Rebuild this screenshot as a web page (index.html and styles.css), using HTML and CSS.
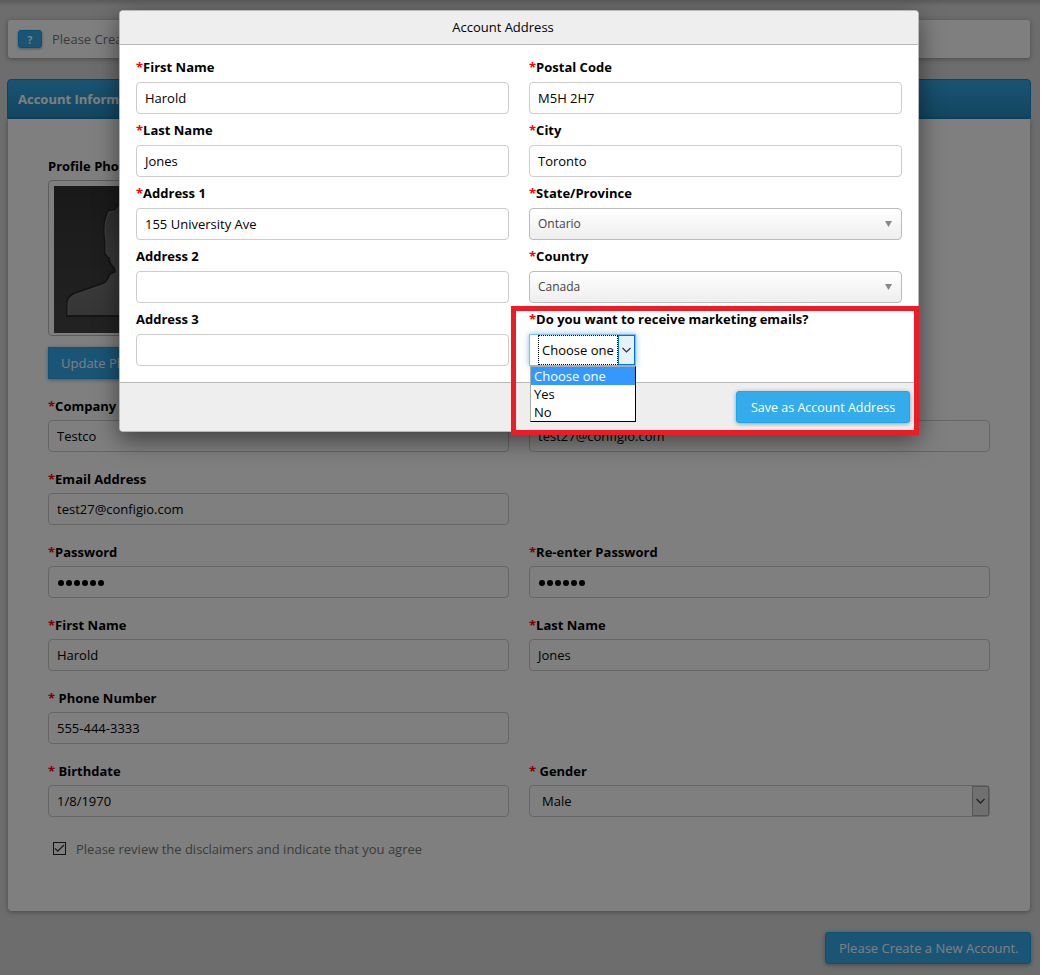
FILE: index.html
```html
<!DOCTYPE html>
<html lang="en">
<head>
<meta charset="utf-8">
<title>Account Information</title>
<link rel="stylesheet" href="styles.css">
</head>
<body>
<div class="page">
  <div class="notice"><span class="help">?</span><span class="notice-text">Please Create a New Account.</span></div>
  <section class="panel">
    <h1 class="panel-title"><span class="title-text">Account Information</span></h1>
    <div class="panel-body">
      <div class="profile">
        <div class="label">Profile Photo</div>
        <div class="photo">
          <svg width="147" height="147" viewBox="0 0 147 147">
            <defs>
              <linearGradient id="back" x1="0" y1="0" x2="0" y2="1"><stop offset="0" stop-color="#323232"/><stop offset=".35" stop-color="#3a3a3a"/><stop offset="1" stop-color="#454545"/></linearGradient>
              <linearGradient id="person" x1="0" y1="0" x2="0" y2="1"><stop offset="0" stop-color="#5a5a5a"/><stop offset=".6" stop-color="#767676"/><stop offset="1" stop-color="#6c6c6c"/></linearGradient>
            </defs>
            <rect width="147" height="147" fill="url(#back)"/>
            <path d="M13 130V119Q13 111 19 108L50 97Q54 94 56 88L61 86L60 82Q55 77 55 72L51 68V55Q48 37 54 25L60 24Q64 17 74 16Q98 15 98 40L96 68L87 86Q90 96 98 98L127 109Q134 112 134 120V130Z" fill="url(#person)" stroke="#2a2a2a" stroke-width="2"/>
            <path d="M14 129V119Q14 112 20 109L51 98Q55 95 57 89L62 87M55 71L52 67V55Q49 38 55 26L61 25" fill="none" stroke="#808080"/>
          </svg>
        </div>
        <div class="btn square">Update Photo</div>
      </div>
      <div class="grid">
        <div class="field"><div class="label"><i>*</i>Company</div><div class="input">Testco</div></div>
        <div class="field"><div class="label"></div><div class="input">test27@configio.com</div></div>
        <div class="field"><div class="label"><i>*</i>Email Address</div><div class="input">test27@configio.com</div></div>
        <div></div>
        <div class="field"><div class="label"><i>*</i>Password</div><div class="input"><svg class="dots" width="48" height="6"><circle cx="4" cy="3" r="3"/><circle cx="12" cy="3" r="3"/><circle cx="20" cy="3" r="3"/><circle cx="28" cy="3" r="3"/><circle cx="36" cy="3" r="3"/><circle cx="44" cy="3" r="3"/></svg></div></div>
        <div class="field"><div class="label"><i>*</i>Re-enter Password</div><div class="input"><svg class="dots" width="48" height="6"><circle cx="4" cy="3" r="3"/><circle cx="12" cy="3" r="3"/><circle cx="20" cy="3" r="3"/><circle cx="28" cy="3" r="3"/><circle cx="36" cy="3" r="3"/><circle cx="44" cy="3" r="3"/></svg></div></div>
        <div class="field"><div class="label"><i>*</i>First Name</div><div class="input">Harold</div></div>
        <div class="field"><div class="label"><i>*</i>Last Name</div><div class="input">Jones</div></div>
        <div class="field"><div class="label"><i>*</i> Phone Number</div><div class="input">555-444-3333</div></div>
        <div></div>
        <div class="field"><div class="label"><i>*</i> Birthdate</div><div class="input">1/8/1970</div></div>
        <div class="field"><div class="label"><i>*</i> Gender</div><div class="input gender"><span>Male</span><span class="drop"><svg width="9" height="6"><path d="M.5 1L4.5 5L8.5 1" fill="none" stroke="#444" stroke-width="1.3"/></svg></span></div></div>
      </div>
      <div class="agree"><svg width="13" height="13"><rect x=".5" y=".5" width="12" height="12" fill="none" stroke="#222"/><path d="M2 6.5L4.7 9.2L11 3" fill="none" stroke="#333" stroke-width="1.3"/></svg><span>Please review the disclaimers and indicate that you agree</span></div>
    </div>
  </section>
  <div class="actions"><div class="btn">Please Create a New Account.</div></div>
  <div class="overlay"></div>

  <div class="modal">
    <div class="modal-head">Account Address</div>
    <div class="modal-body">
      <div class="field"><div class="label"><i>*</i>First Name</div><div class="input">Harold</div></div>
      <div class="field"><div class="label"><i>*</i>Postal Code</div><div class="input">M5H 2H7</div></div>
      <div class="field"><div class="label"><i>*</i>Last Name</div><div class="input">Jones</div></div>
      <div class="field"><div class="label"><i>*</i>City</div><div class="input">Toronto</div></div>
      <div class="field"><div class="label"><i>*</i>Address 1</div><div class="input">155 University Ave</div></div>
      <div class="field"><div class="label"><i>*</i>State/Province</div><div class="input chosen"><span>Ontario</span><svg width="7" height="6"><path d="M0 0H7L3.5 6Z" fill="#888"/></svg></div></div>
      <div class="field"><div class="label">Address 2</div><div class="input"></div></div>
      <div class="field"><div class="label"><i>*</i>Country</div><div class="input chosen"><span>Canada</span><svg width="7" height="6"><path d="M0 0H7L3.5 6Z" fill="#888"/></svg></div></div>
      <div class="field"><div class="label">Address 3</div><div class="input"></div></div>
      <div class="field"><div class="label"><i>*</i>Do you want to receive marketing emails?</div>
        <div class="select"><span class="current">Choose one</span><span class="arrow"><svg width="9" height="6"><path d="M.5 1L4.5 5L8.5 1" fill="none" stroke="#333" stroke-width="1.2"/></svg></span>
          <div class="options"><div class="option active">Choose one</div><div class="option">Yes</div><div class="option">No</div></div>
        </div>
      </div>
    </div>
    <div class="modal-foot"><div class="btn save">Save as Account Address</div></div>
  </div>
  <div class="highlight"></div>
</div>
</body>
</html>
```
FILE: styles.css
```css
* { box-sizing: border-box; }
body { margin: 0; background: #fff; font: 13px/18px "Open Sans", sans-serif; color: #000; }
.page { position: relative; width: 1040px; height: 975px; padding: 20px 9px 0 7px; overflow: hidden; background: linear-gradient(#b4b4b4, #dadada 6px); }
.notice { display: flex; align-items: center; gap: 10px; width: 1022px; height: 38px; margin-left: 1px; padding: 0 10px; border-radius: 3px; background: #fff; color: #777; box-shadow: 0 1px 5px rgba(0,0,0,.35); }
.notice-text { width: 68px; overflow: hidden; white-space: nowrap; }
.help { width: 24px; height: 18px; border: 1px solid #15a1ed; border-radius: 3px; background: #34abeb; color: #fff; font-size: 10px; font-weight: 700; line-height: 18px; text-align: center; box-shadow: 0 1px 3px rgba(0,0,0,.35); }
.panel { width: 1024px; margin-top: 21px; }
.panel-title { height: 40px; margin: 0; padding: 0 10px; border: 1px solid #0b8ccd; border-radius: 4px 4px 0 0; background: linear-gradient(#35a7e5, #268cbf); color: #fff; font-size: 13px; line-height: 38px; }
.title-text { display: block; width: 102px; overflow: hidden; white-space: nowrap; }
.panel-body { height: 792px; margin: 0 1px; padding: 38px 40px 0; border-radius: 0 0 4px 4px; background: #fff; box-shadow: 0 1px 5px rgba(0,0,0,.35); }
.profile { height: 240px; }
.label { height: 23px; font-weight: 700; white-space: pre; }
.label i { color: #f00; font-style: normal; }
.photo { width: 159px; height: 156px; padding: 5px; border: 1px solid #bbb; border-radius: 4px; }
.photo svg { display: block; }
.btn { height: 32px; padding: 0 13px; border: 1px solid #15a9f8; border-radius: 3px; background: #34abeb; color: #fff; line-height: 30px; white-space: nowrap; box-shadow: 0 1px 4px rgba(0,0,0,.35); }
.square { width: 110px; margin-top: 11px; border-radius: 0; padding-left: 12px; }
.grid { display: grid; grid-template-columns: 461px 461px; column-gap: 20px; grid-auto-rows: 73px; }
.input { display: flex; align-items: center; height: 32px; padding: 0 8px; border: 1px solid #ccc; border-radius: 4px; background: #fff; }
.dots { margin-top: 2px; }
.gender { justify-content: space-between; padding: 0 0 0 12px; }
.drop { display: flex; align-items: center; justify-content: center; width: 17px; height: 30px; border: 1px solid #adadad; background: #e1e1e1; }
.agree { display: flex; align-items: center; gap: 10px; margin: 5px 0 0 5px; color: #777; }
.agree svg { margin-top: -2px; }
.actions { display: flex; justify-content: flex-end; width: 1024px; margin-top: 21px; }
.actions .btn { width: 206px; }
.overlay { position: absolute; inset: 0; background: rgba(0,0,0,.5); }
.modal { position: absolute; left: 119px; top: 10px; width: 800px; height: 422px; border: 1px solid #b8b8b8; border-radius: 4px; background: #fff; box-shadow: 0 8px 24px rgba(0,0,0,.5); }
.modal-head { height: 34px; padding-right: 32px; border-bottom: 1px solid #b8b8b8; border-radius: 3px 3px 0 0; background: #eee; line-height: 33px; text-align: center; }
.modal-body { display: grid; grid-template-columns: 373px 373px; column-gap: 20px; grid-auto-rows: 63px; height: 337px; padding: 13px 16px 0; }
.modal-body .label { height: 24px; }
.modal-foot { display: flex; justify-content: flex-end; height: 49px; padding: 8px 8px 0; border-top: 1px solid #b8b8b8; border-radius: 0 0 3px 3px; background: #eee; }
.chosen { justify-content: space-between; padding-right: 9px; border-color: #bbb; background: linear-gradient(#fff, #eee); color: #444; font-size: 12px; }
.save { width: 174px; padding-left: 14px; font-size: 12.5px; line-height: 32px; }
.select { position: relative; display: flex; width: 107px; height: 32px; padding-left: 8px; border: 1px solid #7abaf5; background: #fff; box-shadow: 0 0 6px rgba(82,168,236,.7); }
.current { width: 80px; border: 1px dotted #000; padding-left: 3px; line-height: 28px; white-space: nowrap; }
.arrow { display: flex; align-items: center; justify-content: center; width: 17px; border: 1px solid #0078d7; background: #e5f1fb; }
.arrow svg { margin-left: -1px; }
.options { position: absolute; left: 0; top: 31px; width: 106px; height: 56px; border: 1px solid #000; border-left-color: #aaa; border-top-color: #aaa; background: #fff; }
.option { height: 18px; padding-left: 3px; line-height: 19px; }
.active { background: #39f; color: #fff; }
.highlight { position: absolute; left: 511px; top: 306px; width: 408px; height: 129px; border: 5px solid #ed1c24; }
```
